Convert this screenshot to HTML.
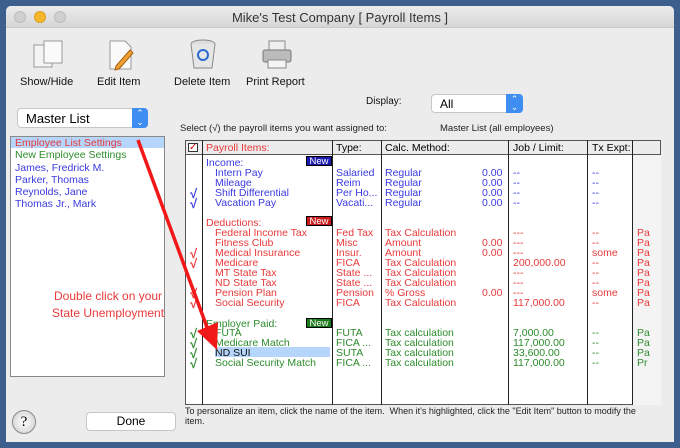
<!DOCTYPE html>
<html><head><meta charset="utf-8"><style>
*{margin:0;padding:0;box-sizing:border-box}
body{width:680px;height:448px;overflow:hidden;background:#3c5f8e;font-family:"Liberation Sans",sans-serif;position:relative}
.a{position:absolute;white-space:nowrap}
#win{position:absolute;left:6px;top:6px;width:668px;height:436px;background:#ececec;border-radius:5px 5px 0 0;overflow:hidden}
#tb{position:absolute;left:0;top:0;width:668px;height:22px;background:linear-gradient(#ececec,#d6d6d6);border-bottom:1px solid #c8c8c8}
.dot{position:absolute;top:5px;width:12px;height:12px;border-radius:50%;background:#d0d0d0;border:1px solid #bcbcbc}
.lbl{font-size:11px;color:#111}
.t{font-size:10.5px;line-height:10px}
.ck{font-size:13px;line-height:10px;font-weight:bold}
.b{color:#3a3ae0}.r{color:#e8393a}.g{color:#2c8c2c}
.vl{position:absolute;width:1px;background:#222}
</style></head><body>
<div id="win">
<div id="tb">
<div class="dot" style="left:8px"></div>
<div class="dot" style="left:28px;background:#f6b72b;border-color:#dd9e1a"></div>
<div class="dot" style="left:48px"></div>
<div class="a" style="left:0;width:668px;text-align:center;top:4px;font-size:13px;color:#333">Mike's Test Company [ Payroll Items ]</div>
</div>
<svg class="a" style="left:26px;top:33px" width="36" height="32"><rect x="2" y="6" width="18" height="22" fill="#f4f4f4" stroke="#999"/><rect x="12" y="2" width="18" height="22" fill="#fafafa" stroke="#999"/></svg>
<svg class="a" style="left:100px;top:32px" width="30" height="34"><path d="M4 3h15l6 6v22H4z" fill="#fafafa" stroke="#999"/><path d="M10 28l14-16 3 3-14 16-4 1z" fill="#f0a030" stroke="#a06010"/></svg>
<svg class="a" style="left:182px;top:32px" width="30" height="34"><ellipse cx="15" cy="6" rx="12" ry="4" fill="#ddd" stroke="#888"/><path d="M3 6l3 24h18l3-24" fill="#e6e6e6" stroke="#888"/><circle cx="15" cy="17" r="5" fill="none" stroke="#2a6ad0" stroke-width="2"/></svg>
<svg class="a" style="left:254px;top:32px" width="34" height="34"><rect x="9" y="3" width="16" height="10" fill="#eee" stroke="#888"/><rect x="3" y="12" width="28" height="12" rx="2" fill="#bbb" stroke="#777"/><rect x="8" y="22" width="18" height="8" fill="#f4f4f4" stroke="#888"/></svg>
<div class="a lbl" style="left:14px;top:70px">Show/Hide</div>
<div class="a lbl" style="left:91px;top:70px">Edit Item</div>
<div class="a lbl" style="left:168px;top:70px">Delete Item</div>
<div class="a lbl" style="left:240px;top:70px">Print Report</div>
<div class="a" style="left:11px;top:102px;width:131px;height:20px;background:#fff;border:1px solid #c6c6c6;border-radius:4px;font-size:13px;padding:2px 0 0 8px">Master List</div>
<div class="a" style="left:126px;top:102px;width:16px;height:20px;background:#3d8ef0;border-radius:0 4px 4px 0;color:#fff;font-size:9px;text-align:center;line-height:9px;padding-top:1px">⌃<br>⌄</div>
<div class="a lbl" style="left:360px;top:90px;font-size:10px">Display:</div>
<div class="a" style="left:425px;top:88px;width:92px;height:19px;background:#fff;border:1px solid #c6c6c6;border-radius:4px;font-size:12px;padding:2px 0 0 8px">All</div>
<div class="a" style="left:500px;top:88px;width:17px;height:19px;background:#3d8ef0;border-radius:0 4px 4px 0;color:#fff;font-size:9px;text-align:center;line-height:8px;padding-top:1px">⌃<br>⌄</div>
<div class="a" style="left:174px;top:117px;font-size:9.5px;color:#222">Select (√) the payroll items you want assigned to:</div>
<div class="a" style="left:434px;top:117px;font-size:9.5px;color:#222">Master List (all employees)</div>
<div class="a" style="left:4px;top:130px;width:155px;height:241px;background:#fff;border:1px solid #888"></div>
<div class="a" style="left:5px;top:131px;width:153px;height:11px;background:#b5d5fb"></div>
<div class="a t r" style="left:9px;top:132px">Employee List Settings</div>
<div class="a t g" style="left:9px;top:144px">New Employee Settings</div>
<div class="a t b" style="left:9px;top:156px;line-height:12px">James, Fredrick M.<br>Parker, Thomas<br>Reynolds, Jane<br>Thomas Jr., Mark</div>
<div class="a" style="left:46px;top:282px;font-size:12px;color:#e8393a;text-align:center;line-height:17px">Double click on your<br>State Unemployment</div>
<div class="a" style="left:179px;top:134px;width:476px;height:265px;background:#fff;border:1px solid #555"></div>
<div class="a" style="left:179px;top:134px;width:476px;height:15px;background:#ececec;border:1px solid #555"></div>
<div class="a" style="left:626px;top:149px;width:29px;height:250px;background:#f4f4f4"></div>
<div class="vl" style="left:196px;top:134px;height:265px"></div>
<div class="vl" style="left:326px;top:134px;height:265px"></div>
<div class="vl" style="left:375px;top:134px;height:265px"></div>
<div class="vl" style="left:502px;top:134px;height:265px"></div>
<div class="vl" style="left:581px;top:134px;height:265px"></div>
<div class="vl" style="left:626px;top:134px;height:265px"></div>
<div class="a" style="left:182px;top:137px;width:10px;height:9px;border:1px solid #333;background:#fff;color:#d00;font-size:10px;line-height:7px;text-align:center">✓</div>
<div class="a t r" style="left:200px;top:137px">Payroll Items:</div>
<div class="a t" style="left:330px;top:137px">Type:</div>
<div class="a t" style="left:379px;top:137px">Calc. Method:</div>
<div class="a t" style="left:507px;top:137px">Job / Limit:</div>
<div class="a t" style="left:586px;top:137px">Tx Expt:</div>
<div class="a" style="left:300px;top:150px;width:26px;height:10px;background:#1a1ab0;color:#fff;font-size:9.5px;line-height:10px;text-align:center;border:1px solid #000">New</div>
<div class="a" style="left:300px;top:210px;width:26px;height:10px;background:#c81a1a;color:#fff;font-size:9.5px;line-height:10px;text-align:center;border:1px solid #000">New</div>
<div class="a" style="left:300px;top:312px;width:26px;height:10px;background:#1a7a1a;color:#fff;font-size:9.5px;line-height:10px;text-align:center;border:1px solid #000">New</div>
<div class="a t b" style="left:200px;top:152px">Income:</div>
<div class="a t b" style="left:209px;top:162px">Intern Pay<br>Mileage<br>Shift Differential<br>Vacation Pay</div>
<div class="a t b" style="left:330px;top:162px">Salaried<br>Reim<br>Per Ho...<br>Vacati...</div>
<div class="a t b" style="left:379px;top:162px">Regular<br>Regular<br>Regular<br>Regular</div>
<div class="a t b" style="left:476px;top:162px">0.00<br>0.00<br>0.00<br>0.00</div>
<div class="a t b" style="left:507px;top:162px">--<br>--<br>--<br>--</div>
<div class="a t b" style="left:586px;top:162px">--<br>--<br>--<br>--</div>
<div class="a ck b" style="left:184px;top:183px">√<br>√</div>
<div class="a t r" style="left:200px;top:212px">Deductions:</div>
<div class="a t r" style="left:209px;top:222px">Federal Income Tax<br>Fitness Club<br>Medical Insurance<br>Medicare<br>MT State Tax<br>ND State Tax<br>Pension Plan<br>Social Security</div>
<div class="a t r" style="left:330px;top:222px">Fed Tax<br>Misc<br>Insur.<br>FICA<br>State ...<br>State ...<br>Pension<br>FICA</div>
<div class="a t r" style="left:379px;top:222px">Tax Calculation<br>Amount<br>Amount<br>Tax Calculation<br>Tax Calculation<br>Tax Calculation<br>% Gross<br>Tax Calculation</div>
<div class="a t r" style="left:476px;top:222px"><br>0.00<br>0.00<br><br><br><br>0.00</div>
<div class="a t r" style="left:507px;top:222px">---<br>---<br>---<br>200,000.00<br>---<br>---<br>---<br>117,000.00</div>
<div class="a t r" style="left:586px;top:222px">--<br>--<br>some<br>--<br>--<br>--<br>some<br>--</div>
<div class="a t r" style="left:631px;top:222px">Pa<br>Pa<br>Pa<br>Pa<br>Pa<br>Pa<br>Pa<br>Pa</div>
<div class="a ck r" style="left:184px;top:243px">√<br>√<br><br><br>√<br>√</div>
<div class="a t g" style="left:200px;top:313px">Employer Paid:</div>
<div class="a" style="left:209px;top:341px;width:115px;height:10px;background:#b5d5fb"></div>
<div class="a t g" style="left:209px;top:322px">FUTA<br>Medicare Match<br><span style="color:#111">ND SUI</span><br>Social Security Match</div>
<div class="a t g" style="left:330px;top:322px">FUTA<br>FICA ...<br>SUTA<br>FICA ...</div>
<div class="a t g" style="left:379px;top:322px">Tax calculation<br>Tax calculation<br>Tax calculation<br>Tax calculation</div>
<div class="a t g" style="left:507px;top:322px">7,000.00<br>117,000.00<br>33,600.00<br>117,000.00</div>
<div class="a t g" style="left:586px;top:322px">--<br>--<br>--<br>--</div>
<div class="a t g" style="left:631px;top:322px">Pa<br>Pa<br>Pa<br>Pr</div>
<div class="a ck g" style="left:184px;top:323px">√<br>√<br>√<br>√</div>
<div class="a" style="left:179px;top:400px;font-size:9px;color:#222;line-height:10px">To personalize an item, click the name of the item.&nbsp; When it's highlighted, click the "Edit Item" button to modify the<br>item.</div>
<div class="a" style="left:6px;top:404px;width:24px;height:24px;border-radius:50%;background:radial-gradient(#fff,#ccc);border:1px solid #888;font-family:'Liberation Serif',serif;font-size:15px;text-align:center;line-height:22px">?</div>
<div class="a" style="left:80px;top:406px;width:90px;height:19px;background:#fff;border:1px solid #c6c6c6;border-radius:4px;font-size:12px;text-align:center;line-height:17px">Done</div>
</div>
<svg class="a" style="left:0;top:0" width="680" height="448"><line x1="138" y1="140" x2="208" y2="330" stroke="#f01818" stroke-width="3.5"/><polygon points="217,350 197,331 218,322" fill="#f01818"/></svg>
</body></html>
